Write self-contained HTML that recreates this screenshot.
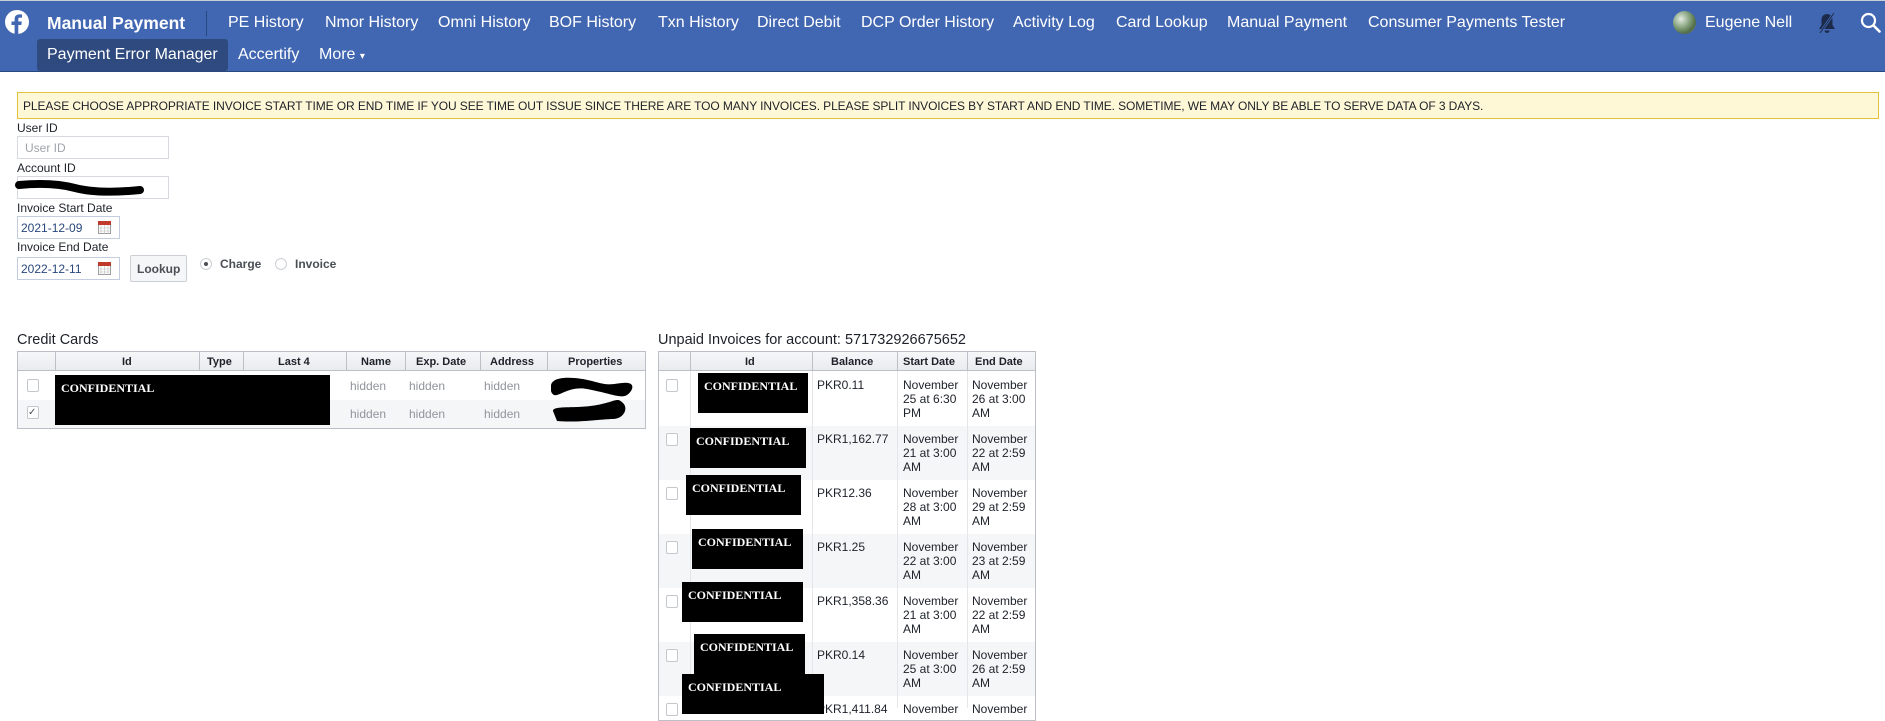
<!DOCTYPE html>
<html><head><meta charset="utf-8"><style>
*{box-sizing:border-box;margin:0;padding:0}
body{width:1885px;height:708px;overflow:hidden;background:#fff;font-family:"Liberation Sans",Arial,sans-serif;color:#1d2129;position:relative}
.a{position:absolute;white-space:nowrap}
#nav{position:absolute;left:0;top:0;width:1885px;height:72px;background:#4267b2;border-top:1px solid #c9cfd9;border-bottom:1px solid #29487d}
.n{position:absolute;color:#fff;font-size:16px;top:13px}
.n2{position:absolute;color:#fff;font-size:16px;top:45px}
.lbl{position:absolute;font-size:12px;left:17px;color:#1d2129}
.inp{position:absolute;left:17px;border:1px solid #d6d9dd;background:#fff;font-size:12px}
.cb{position:absolute;width:12px;height:13px;border:1px solid #c4c7cc;border-radius:2px;background:#fff}
.blk{position:absolute;background:#000;color:#fff;font-family:"Liberation Serif",serif;font-weight:bold;font-size:12px;padding:6px 0 0 6px}
.g{position:absolute;color:#90949c;font-size:12px}
.t{position:absolute;font-size:12px;line-height:14px;color:#1d2129}
</style></head><body>
<div id="nav">
<svg class="a" style="left:5px;top:9px" width="24" height="24" viewBox="0 0 24 24"><circle cx="12" cy="12" r="12" fill="#fff"/><path d="M13.3 24V15h3l.5-3.5h-3.5V9.3c0-1 .3-1.7 1.8-1.7h1.9V4.5c-.3 0-1.5-.1-2.8-.1-2.8 0-4.6 1.7-4.6 4.8v2.3H6.5V15h3.1v9z" fill="#4267b2"/></svg>
<div class="n" style="left:47px;font-weight:bold;font-size:17.5px;top:12px">Manual Payment</div>
<div class="a" style="left:206px;top:10px;width:1px;height:25px;background:#29487d"></div>
<div class="n" style="left:228px">PE History</div>
<div class="n" style="left:325px">Nmor History</div>
<div class="n" style="left:438px">Omni History</div>
<div class="n" style="left:549px">BOF History</div>
<div class="n" style="left:658px">Txn History</div>
<div class="n" style="left:757px">Direct Debit</div>
<div class="n" style="left:861px">DCP Order History</div>
<div class="n" style="left:1013px">Activity Log</div>
<div class="n" style="left:1116px">Card Lookup</div>
<div class="n" style="left:1227px">Manual Payment</div>
<div class="n" style="left:1368px">Consumer Payments Tester</div>
<div class="a" style="left:1673px;top:10px;width:23px;height:23px;border-radius:50%;background:radial-gradient(circle at 35% 35%,#e4ebe2,#7d9b74 45%,#4f6b47 70%,#b6a98a)"></div>
<div class="n" style="left:1705px">Eugene Nell</div>
<svg class="a" style="left:1817px;top:11px" width="20" height="22" viewBox="0 0 20 22"><path d="M10 2c-3.5 0-5.5 2.6-5.5 6v5L2 17h16l-2.5-4V8c0-3.4-2-6-5.5-6zM7.5 18.5a2.5 2.5 0 005 0z" fill="#1c2b4a"/><path d="M3 21L17 1" stroke="#4267b2" stroke-width="2.5"/><path d="M3 21L17 1" stroke="#1c2b4a" stroke-width="1"/></svg>
<svg class="a" style="left:1860px;top:11px" width="21" height="21" viewBox="0 0 21 21"><circle cx="8.5" cy="8.5" r="6.5" fill="none" stroke="#fff" stroke-width="2.2"/><path d="M13.5 13.5L19.5 19.5" stroke="#fff" stroke-width="2.6" stroke-linecap="round"/></svg>
<div class="a" style="left:37px;top:38px;width:191px;height:32px;background:#2e4a7f;border-radius:3px"></div>
<div class="n2" style="left:47px">Payment Error Manager</div>
<div class="n2" style="left:238px">Accertify</div>
<div class="n2" style="left:319px">More <span style="font-size:10px">▾</span></div>
</div>
<div class="a" style="left:17px;top:92px;width:1862px;height:27px;background:#fff8d6;border:1px solid #e2c33d;font-size:12px;padding:6px 0 0 5px;color:#1d2129;letter-spacing:-0.1px">PLEASE CHOOSE APPROPRIATE INVOICE START TIME OR END TIME IF YOU SEE TIME OUT ISSUE SINCE THERE ARE TOO MANY INVOICES. PLEASE SPLIT INVOICES BY START AND END TIME. SOMETIME, WE MAY ONLY BE ABLE TO SERVE DATA OF 3 DAYS.</div>
<div class="lbl" style="top:121px">User ID</div>
<div class="inp" style="top:136px;width:152px;height:23px;color:#a0a4aa;padding:4px 0 0 7px">User ID</div>
<div class="lbl" style="top:161px">Account ID</div>
<div class="inp" style="top:176px;width:152px;height:23px"></div>
<svg class="a" style="left:15px;top:178px" width="135" height="22" viewBox="0 0 135 22"><path d="M4 7C25 5 45 6 60 10S95 15 125 12" stroke="#000" stroke-width="8" stroke-linecap="round" fill="none"/></svg>
<div class="lbl" style="top:201px">Invoice Start Date</div>
<div class="inp" style="top:216px;width:103px;height:23px;color:#29487d;padding:4px 0 0 3px;border-color:#c4cde0">2021-12-09</div>
<div class="lbl" style="top:240px">Invoice End Date</div>
<div class="inp" style="top:257px;width:103px;height:23px;color:#29487d;padding:4px 0 0 3px;border-color:#c4cde0">2022-12-11</div>
<svg class="a" style="left:98px;top:221px" width="13" height="13"><rect x=".5" y=".5" width="12" height="12" fill="#fff" stroke="#999"/><rect x="0" y="0" width="13" height="4" fill="#c0392b"/><path d="M0 7h13M0 10h13M3 4v9M6.5 4v9M10 4v9" stroke="#bbb" stroke-width=".6"/></svg>
<svg class="a" style="left:98px;top:262px" width="13" height="13"><rect x=".5" y=".5" width="12" height="12" fill="#fff" stroke="#999"/><rect x="0" y="0" width="13" height="4" fill="#c0392b"/><path d="M0 7h13M0 10h13M3 4v9M6.5 4v9M10 4v9" stroke="#bbb" stroke-width=".6"/></svg>
<div class="a" style="left:130px;top:255px;width:57px;height:27px;border:1px solid #ccd0d5;background:#f5f6f7;border-radius:2px;font-size:12px;font-weight:bold;padding:6px 0 0 6px;color:#4b4f56">Lookup</div>
<div class="a" style="left:200px;top:258px;width:12px;height:12px;border:1px solid #ccd0d5;border-radius:50%;background:#fff"><div style="width:4px;height:4px;background:#4b4f56;border-radius:50%;margin:3px"></div></div>
<div class="a" style="left:220px;top:257px;font-size:12px;font-weight:bold;color:#4b4f56">Charge</div>
<div class="a" style="left:275px;top:258px;width:12px;height:12px;border:1px solid #ccd0d5;border-radius:50%;background:#fff"></div>
<div class="a" style="left:295px;top:257px;font-size:12px;font-weight:bold;color:#4b4f56">Invoice</div>

<div class="a" style="left:17px;top:332px;font-size:14.5px">Credit Cards</div>
<div class="a" style="left:17px;top:351px;width:629px;height:78px;border:1px solid #bcc0c6;background:#fff"></div>
<div class="a" style="left:18px;top:352px;width:627px;height:19px;background:linear-gradient(#f6f7f9,#e9ebee);border-bottom:1px solid #bcc0c6"></div>
<div class="a" style="left:18px;top:400px;width:627px;height:28px;background:#f5f6f7"></div>
<div class="a" style="left:18px;top:352px;font-size:11px;font-weight:bold;width:627px;height:19px">
<span class="a" style="left:37px;top:0;width:1px;height:19px;background:#bcc0c6"></span>
<span class="a" style="left:181px;top:0;width:1px;height:19px;background:#bcc0c6"></span>
<span class="a" style="left:225px;top:0;width:1px;height:19px;background:#bcc0c6"></span>
<span class="a" style="left:328px;top:0;width:1px;height:19px;background:#bcc0c6"></span>
<span class="a" style="left:387px;top:0;width:1px;height:19px;background:#bcc0c6"></span>
<span class="a" style="left:462px;top:0;width:1px;height:19px;background:#bcc0c6"></span>
<span class="a" style="left:529px;top:0;width:1px;height:19px;background:#bcc0c6"></span>
<span class="a" style="left:104px;top:4px">Id</span><span class="a" style="left:189px;top:4px">Type</span><span class="a" style="left:260px;top:4px">Last 4</span><span class="a" style="left:343px;top:4px">Name</span><span class="a" style="left:398px;top:4px">Exp. Date</span><span class="a" style="left:472px;top:4px">Address</span><span class="a" style="left:550px;top:4px">Properties</span>
</div>
<div class="cb" style="left:27px;top:379px"></div>
<div class="cb" style="left:27px;top:406px;font-size:10px;line-height:11px;color:#4b4f56">✓</div>
<div class="blk" style="left:55px;top:375px;width:275px;height:50px">CONFIDENTIAL</div>
<div class="g" style="left:350px;top:379px">hidden</div><div class="g" style="left:409px;top:379px">hidden</div><div class="g" style="left:484px;top:379px">hidden</div>
<div class="g" style="left:350px;top:407px">hidden</div><div class="g" style="left:409px;top:407px">hidden</div><div class="g" style="left:484px;top:407px">hidden</div>
<svg class="a" style="left:547px;top:373px" width="90" height="54"><path d="M4 12C6 2 30 4 45 8S60 12 75 10 86 18 80 22 62 20 40 16 8 30 4 18Z" fill="#000"/><path d="M6 38C6 32 30 36 50 32S70 24 76 30 76 46 66 46 30 50 10 48Z" fill="#000"/></svg>

<div class="a" style="left:658px;top:332px;font-size:14.5px">Unpaid Invoices for account: 571732926675652</div>
<div class="a" style="left:658px;top:351px;width:378px;height:370px;border:1px solid #bcc0c6;background:#fff"></div>
<div class="a" style="left:659px;top:352px;width:376px;height:19px;background:linear-gradient(#f6f7f9,#e9ebee);border-bottom:1px solid #bcc0c6"></div>
<div class="a" style="left:659px;top:426px;width:376px;height:54px;background:#f5f6f7"></div>
<div class="a" style="left:659px;top:534px;width:376px;height:54px;background:#f5f6f7"></div>
<div class="a" style="left:659px;top:642px;width:376px;height:54px;background:#f5f6f7"></div>
<div class="a" style="left:659px;top:352px;width:376px;height:356px;font-size:11px;font-weight:bold">
<span class="a" style="left:31px;top:0;width:1px;height:356px;background:#e4e6ea"></span>
<span class="a" style="left:153px;top:0;width:1px;height:356px;background:#e4e6ea"></span>
<span class="a" style="left:238px;top:0;width:1px;height:356px;background:#e4e6ea"></span>
<span class="a" style="left:308px;top:0;width:1px;height:356px;background:#e4e6ea"></span>
<span class="a" style="left:31px;top:0;width:1px;height:19px;background:#bcc0c6"></span>
<span class="a" style="left:153px;top:0;width:1px;height:19px;background:#bcc0c6"></span>
<span class="a" style="left:238px;top:0;width:1px;height:19px;background:#bcc0c6"></span>
<span class="a" style="left:308px;top:0;width:1px;height:19px;background:#bcc0c6"></span>
<span class="a" style="left:86px;top:4px">Id</span><span class="a" style="left:172px;top:4px">Balance</span><span class="a" style="left:244px;top:4px">Start Date</span><span class="a" style="left:316px;top:4px">End Date</span>
</div>
<div class="cb" style="left:666px;top:379px"></div><div class="cb" style="left:666px;top:433px"></div><div class="cb" style="left:666px;top:487px"></div><div class="cb" style="left:666px;top:541px"></div><div class="cb" style="left:666px;top:595px"></div><div class="cb" style="left:666px;top:649px"></div><div class="cb" style="left:666px;top:703px"></div>
<div class="t" style="left:817px;top:378px">PKR0.11</div>
<div class="t" style="left:903px;top:378px">November<br>25 at 6:30<br>PM</div><div class="t" style="left:972px;top:378px">November<br>26 at 3:00<br>AM</div>
<div class="t" style="left:817px;top:432px">PKR1,162.77</div>
<div class="t" style="left:903px;top:432px">November<br>21 at 3:00<br>AM</div><div class="t" style="left:972px;top:432px">November<br>22 at 2:59<br>AM</div>
<div class="t" style="left:817px;top:486px">PKR12.36</div>
<div class="t" style="left:903px;top:486px">November<br>28 at 3:00<br>AM</div><div class="t" style="left:972px;top:486px">November<br>29 at 2:59<br>AM</div>
<div class="t" style="left:817px;top:540px">PKR1.25</div>
<div class="t" style="left:903px;top:540px">November<br>22 at 3:00<br>AM</div><div class="t" style="left:972px;top:540px">November<br>23 at 2:59<br>AM</div>
<div class="t" style="left:817px;top:594px">PKR1,358.36</div>
<div class="t" style="left:903px;top:594px">November<br>21 at 3:00<br>AM</div><div class="t" style="left:972px;top:594px">November<br>22 at 2:59<br>AM</div>
<div class="t" style="left:817px;top:648px">PKR0.14</div>
<div class="t" style="left:903px;top:648px">November<br>25 at 3:00<br>AM</div><div class="t" style="left:972px;top:648px">November<br>26 at 2:59<br>AM</div>
<div class="t" style="left:817px;top:702px">PKR1,411.84</div>
<div class="t" style="left:903px;top:702px">November</div><div class="t" style="left:972px;top:702px">November</div>
<div class="blk" style="left:698px;top:373px;width:110px;height:40px">CONFIDENTIAL</div>
<div class="blk" style="left:690px;top:428px;width:116px;height:40px">CONFIDENTIAL</div>
<div class="blk" style="left:686px;top:475px;width:115px;height:40px">CONFIDENTIAL</div>
<div class="blk" style="left:692px;top:529px;width:111px;height:40px">CONFIDENTIAL</div>
<div class="blk" style="left:682px;top:582px;width:121px;height:40px">CONFIDENTIAL</div>
<div class="blk" style="left:694px;top:634px;width:111px;height:40px">CONFIDENTIAL</div>
<div class="blk" style="left:682px;top:674px;width:142px;height:40px">CONFIDENTIAL</div>
</body></html>
